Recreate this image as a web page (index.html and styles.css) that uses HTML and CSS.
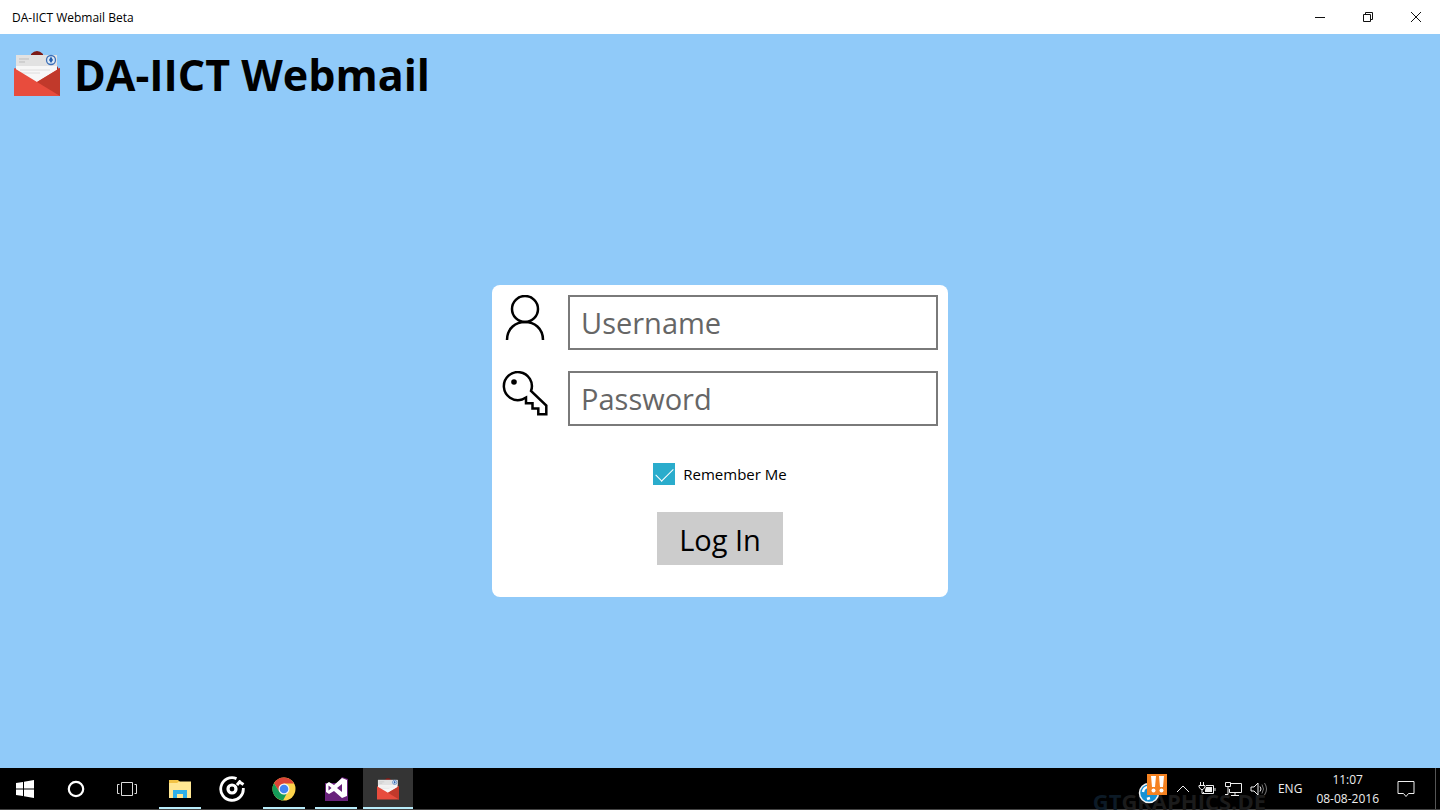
FILE: index.html
```html
<!DOCTYPE html>
<html lang="en">
<head>
  <meta charset="UTF-8" />
  <title>DA-IICT Webmail Beta</title>
  <link rel="stylesheet" href="styles.css">
</head>
<body>

<svg width="0" height="0" class="defs" aria-hidden="true">
  <symbol id="mail" viewBox="0 0 46 46">
    <path d="M17 3 Q23 -3 29 3 V6 H17Z" fill="#7c1a16"/>
    <path d="M0 20 L3 15 H43 L46 20 V44 H0Z" fill="#a82c22"/>
    <path d="M2 4 H43 V36 H2Z" fill="#f7f7f7"/>
    <path d="M2 4 H43 V15 H2Z" fill="#e2e2e2"/>
    <path d="M5 8 H15 M5 11 H11" stroke="#bdbdbd" stroke-width="1"/>
    <path d="M6 19 H36 M6 22 H26" stroke="#dedede" stroke-width="1"/>
    <circle cx="37" cy="9" r="4.500" fill="#dce9f5" stroke="#3c6fb8" stroke-width="1.300"/>
    <path d="M37 5.500 L39 9 L37 12 L35 9Z" fill="#245fae"/>
    <path d="M0 17 L23 31 L46 17 V45 H0Z" fill="#e84c3d"/>
    <path d="M46 17 L23 31 L46 45Z" fill="#c1392b"/>
  </symbol>
</svg>

<div class="titlebar">
  <span class="window-name">DA-IICT Webmail Beta</span>
  <div class="window-buttons">
    <button aria-label="Minimize"><svg width="12" height="12" viewBox="0 0 12 12"><path d="M1 6.500 H11"/></svg></button>
    <button aria-label="Restore"><svg width="12" height="12" viewBox="0 0 12 12"><path d="M1.500 3.500 H8.500 V10.500 H1.500Z M3.500 3.500 V1.500 H10.500 V8.500 H8.500"/></svg></button>
    <button aria-label="Close"><svg width="12" height="12" viewBox="0 0 12 12"><path d="M1 1 L11 11 M11 1 L1 11"/></svg></button>
  </div>
</div>

<div class="page">
  <header class="header">
    <svg class="logo" width="46" height="46"><use href="#mail"/></svg>
    <h1>DA-IICT Webmail</h1>
  </header>

  <main class="content">
    <form class="login">
      <div class="field">
        <label for="username" aria-label="Username">
          <svg width="46" height="46" viewBox="0 0 46 46"><circle cx="23" cy="14" r="13"/><path d="M5 45 C5 21 41 21 41 45"/></svg>
        </label>
        <input type="text" id="username" placeholder="Username">
      </div>
      <div class="field">
        <label for="password" aria-label="Password">
          <svg width="46" height="46" viewBox="0 0 46 46"><path d="M29 20 A14 14 0 1 0 20 28.500 L24 26.500 V32.300 H30.500 V37.500 H36.300 V43.300 H44.300 V34.500Z"/><circle class="dot" cx="12" cy="11" r="2.800"/></svg>
        </label>
        <input type="password" id="password" placeholder="Password">
      </div>
      <div class="remember">
        <input type="checkbox" id="remember" checked>
        <label for="remember">Remember Me</label>
      </div>
      <button type="submit" class="submit-btn">Log In</button>
    </form>
  </main>
</div>

<footer class="taskbar">
  <div class="watermark"><span>GT</span>GRAPHICS.DE</div>

  <div class="system">
    <button aria-label="Start"><svg width="18" height="18" viewBox="0 0 18 18"><path fill="#fff" d="M0 3 L7 2 V8.500 H0Z M8 1.800 L18 0 V8.500 H8Z M0 9.500 H7 V16 L0 15Z M8 9.500 H18 V18 L8 16.200Z"/></svg></button>
    <button aria-label="Cortana"><svg width="18" height="18" viewBox="0 0 18 18"><circle cx="9" cy="9" r="7.200" fill="none" stroke="#fff" stroke-width="2.200"/></svg></button>
    <button aria-label="Task view"><svg width="22" height="16" viewBox="0 0 22 16"><path fill="none" stroke="#ddd" d="M5.500 1.500 H16.500 V14.500 H5.500Z M3.500 3.500 H1.500 V12.500 H3.500 M18.500 3.500 H20.500 V12.500 H18.500"/></svg></button>
  </div>

  <div class="apps">
    <button class="open" aria-label="File Explorer"><svg width="24" height="20" viewBox="0 0 24 20">
      <path fill="#f2c345" d="M1 1 H10 L12 3 H23 V7 H1Z"/>
      <path fill="#ffe793" d="M1 4 H9 L11 2.500 H23 V19 H1Z"/>
      <path fill="#2fb0e8" d="M5 11 H19 V19 H15 V15 H9 V19 H5Z"/>
    </svg></button>
    <button aria-label="Groove Music"><svg width="26" height="26" viewBox="0 0 26 26">
      <path fill="none" stroke="#fff" stroke-width="2.800" d="M17.500 2.600 A11.300 11.300 0 1 0 24.300 12"/>
      <circle cx="13" cy="13" r="4" fill="none" stroke="#fff" stroke-width="3.200"/>
      <path fill="none" stroke="#fff" stroke-width="3" d="M18 9 L20.500 6 L24.500 8.500 M20 7 L22 5"/>
    </svg></button>
    <button class="open" aria-label="Chrome"><svg width="24" height="24" viewBox="0 0 24 24">
      <circle cx="12" cy="12" r="11.500" fill="#fdd44b"/>
      <path fill="#dc4437" d="M2 6.200 A11.500 11.500 0 0 1 22 6.500 H12 L7 14.500Z"/>
      <path fill="#149b58" d="M2 6.200 L7.300 14.800 L12 17.500 L15 16 L11 23.500 A11.500 11.500 0 0 1 2 6.200Z"/>
      <circle cx="12" cy="12" r="5.500" fill="#f5f5f5"/>
      <circle cx="12" cy="12" r="4.300" fill="#4284f3"/>
    </svg></button>
    <button class="open" aria-label="Visual Studio"><svg width="24" height="24" viewBox="0 0 24 24">
      <path fill="#68217a" d="M1 6 H13 L18 0 L24 2 V24 H1Z"/>
      <path fill="#fff" fill-rule="evenodd" d="M18 1 L23 3 V19 L18 21 L10 14 L5 17 L2 15 V7 L5 5 L10 8Z M18 7 L13 11 L18 15Z M4.500 8.500 V13.500 L7.500 11Z"/>
    </svg></button>
    <button class="open active" aria-label="DA-IICT Webmail"><svg width="22" height="22"><use href="#mail"/></svg></button>
  </div>

  <div class="tray">
    <svg width="30" height="30" viewBox="0 0 30 30">
      <circle cx="11" cy="19" r="9.500" fill="#1591d4" stroke="#f4f4f4" stroke-width="1.500"/>
      <path fill="none" stroke="#fff" stroke-width="2.500" d="M5 18 C6 12 12 12 13 15 M9 25 L12 24"/>
      <path fill="#f58220" d="M9 0 H29 V21 H9Z"/>
      <path fill="#fff" d="M13 2 H18 L17 13 H14Z M21 2 H26 L25 13 H22Z"/>
      <circle cx="15.500" cy="16.500" r="2" fill="#fff"/><circle cx="23.500" cy="16.500" r="2" fill="#fff"/>
    </svg>
    <svg width="14" height="14" viewBox="0 0 14 14"><path class="line" d="M1 10 L7 4 L13 10"/></svg>
    <svg width="18" height="14" viewBox="0 0 18 14"><path class="line" d="M8 3.500 H15.500 V11.500 H5.500 V10 M2.500 0 V3 M5.500 0 V3 M1 3.500 H7 V5 L5 7.500 H3 L1 5Z M4 7 V11.500 H6 M17 6 V9"/><path fill="#eee" d="M8 5 H14 V10 H7 V8Z"/></svg>
    <svg width="18" height="16" viewBox="0 0 18 16"><path class="line" d="M7 2.500 H17.500 V11.500 H5.500 V8 M7 14.500 H15 M11 12 V14 M1.500 1.500 H6.500 V5.500 H1.500Z M4 6 V13.500 H1"/></svg>
    <svg width="18" height="14" viewBox="0 0 18 14"><path class="line" d="M1 5 H4 L8 1 V13 L4 9 H1Z M10 4.500 Q12 7 10 9.500"/><path class="line faint" d="M12 2.500 Q15 7 12 11.500 M14.500 1 Q18.500 7 14.500 13"/></svg>
    <span class="lang">ENG</span>
    <div class="clock"><div>11:07</div><div>08-08-2016</div></div>
    <button class="notifications" aria-label="Notifications"><svg width="18" height="18" viewBox="0 0 18 18"><path class="line" d="M1 1.500 H17 V13.500 H11.500 L9 16.500 L6.500 13.500 H1Z"/></svg></button>
  </div>
</footer>

</body>
</html>
```
FILE: styles.css
```css
* {
  box-sizing: border-box;
}
body {
  margin: 0;
  min-height: 100vh;
  display: flex;
  flex-direction: column;
  background: #90caf9;
  color: #000;
  font-family: "Open Sans", "Noto Sans", sans-serif;
}
button {
  border: none;
  padding: 0;
  background: none;
  font-family: inherit;
}
svg {
  display: block;
}
.defs {
  position: absolute;
}

/* window frame */
.titlebar {
  display: flex;
  justify-content: space-between;
  align-items: center;
  height: 34px;
  padding-left: 12px;
  background: white;
}
.window-name {
  font-size: 12px;
}
.window-buttons {
  display: flex;
}
.window-buttons button {
  display: flex;
  align-items: center;
  justify-content: center;
  width: 48px;
  height: 34px;
}
.window-buttons svg {
  fill: none;
  stroke: #111;
}

.page {
  flex: 1;
  display: flex;
  flex-direction: column;
}
.header {
  display: flex;
  align-items: center;
  gap: 14px;
  height: 80px;
  padding-left: 14px;
}
.header h1 {
  margin: 0;
  padding-top: 2px;
  font-size: 43px;
  line-height: 60px;
}
.content {
  flex: 1;
  display: flex;
  align-items: center;
  justify-content: center;
}

/* login card */
.login {
  display: flex;
  flex-direction: column;
  align-items: center;
  width: 456px;
  padding: 10px 10px 32px;
  background: white;
  border-radius: 8px;
}
.field {
  display: flex;
  gap: 20px;
  width: 100%;
  margin-bottom: 21px;
}
.field svg {
  fill: none;
  stroke: #000;
  stroke-width: 2.5;
}
.field .dot {
  fill: #000;
  stroke: none;
}
.field input {
  flex: 1;
  min-width: 0;
  height: 55px;
  padding: 0 11px;
  border: 2px solid #7a7a7a;
  background: white;
  font-family: inherit;
  font-size: 29px;
}
.field input::placeholder {
  color: #666;
}
.remember {
  display: flex;
  align-items: center;
  gap: 8px;
  height: 22px;
  margin: 16px 0 27px;
  font-size: 15px;
}
.remember input {
  appearance: none;
  width: 22px;
  height: 22px;
  margin: 0;
  padding: 5px 3px;
  background: #2aaccc;
}
.remember input:checked::before {
  content: "";
  display: block;
  width: 16px;
  height: 8px;
  border-left: 1px solid white;
  border-bottom: 1px solid white;
  transform: rotate(-45deg);
}
.submit-btn {
  width: 126px;
  height: 53px;
  padding-top: 2px;
  background: #ccc;
  color: #000;
  font-size: 29px;
}

/* taskbar */
.taskbar {
  position: relative;
  display: flex;
  height: 42px;
  background: #000;
  border-bottom: 1px solid #444;
  color: #eee;
  font-size: 12px;
}
.system, .apps {
  display: flex;
}
.system {
  gap: 1px;
}
.apps {
  gap: 2px;
  margin-left: 3px;
}
.system button, .apps button {
  display: flex;
  align-items: center;
  justify-content: center;
  position: relative;
  width: 50px;
}
.apps .active {
  background: #343434;
}
.apps .open::after {
  content: "";
  position: absolute;
  left: 4px;
  right: 4px;
  bottom: 0;
  height: 2px;
  background: #b8ecfa;
}
.apps .active::after {
  left: 0;
  right: 0;
}
.tray {
  position: relative;
  display: flex;
  align-items: center;
  gap: 8px;
  margin-left: auto;
  margin-right: 4px;
  padding-right: 20px;
  border-right: 1px solid #555;
}
.line {
  fill: none;
  stroke: #eee;
}
.faint {
  stroke: #777;
}
.lang {
  margin-left: 2px;
}
.clock {
  margin-left: 6px;
  margin-right: 10px;
  line-height: 19px;
  text-align: center;
}
.watermark {
  position: absolute;
  right: 174px;
  bottom: 0;
  color: #1b1b1b;
  font-size: 22px;
  font-weight: bold;
  line-height: 16px;
}
.watermark span {
  color: #0c1a26;
}
```
